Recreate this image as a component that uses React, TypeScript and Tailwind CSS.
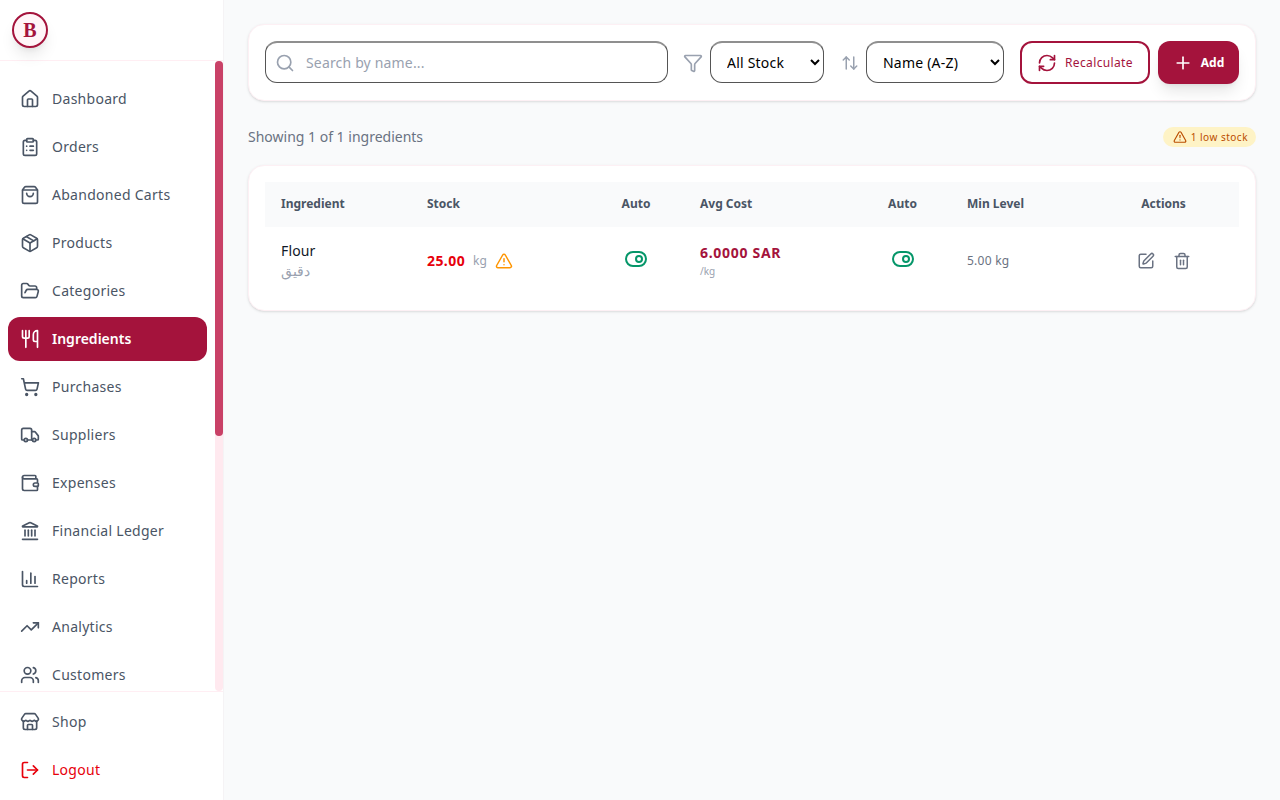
import React from "react";
import {
  House, ClipboardList, ShoppingBag, Package, FolderOpen, Utensils, ShoppingCart, Truck, Wallet, Landmark,
  ChartColumn, TrendingUp, Users, Store, LogOut, Search, Filter, ArrowUpDown, RefreshCw, Plus, TriangleAlert,
  ToggleRight, SquarePen, Trash2,
} from "lucide-react";

const items: [string, React.ComponentType<{ className?: string }>][] = [
  ["Dashboard", House],
  ["Orders", ClipboardList],
  ["Abandoned Carts", ShoppingBag],
  ["Products", Package],
  ["Categories", FolderOpen],
  ["Ingredients", Utensils],
  ["Purchases", ShoppingCart],
  ["Suppliers", Truck],
  ["Expenses", Wallet],
  ["Financial Ledger", Landmark],
  ["Reports", ChartColumn],
  ["Analytics", TrendingUp],
  ["Customers", Users],
];

function NavRow({ label, Icon, active, danger }: { label: string; Icon: React.ComponentType<{ className?: string }>; active?: boolean; danger?: boolean }) {
  const color = active
    ? "bg-[#a4133c] text-white font-semibold"
    : danger
    ? "text-[#e7000b] tracking-[0.02em]"
    : "text-[#4a5565] tracking-[0.02em]";
  return (
    <a className={`flex items-center gap-3 h-11 mb-1 px-3 rounded-xl text-sm shrink-0 ${color}`}>
      <Icon className="w-5 h-5 shrink-0" />
      <span>{label}</span>
    </a>
  );
}

function Toggle() {
  return <ToggleRight className="w-6 h-6 text-[#059669]" />;
}

const field = "h-[42px] rounded-xl border border-[#555555] border-t-2 border-t-[#8f8f8f] bg-white mb-px";

export default function App() {
  return (
    <div className="flex h-screen w-full overflow-hidden bg-[#f9fafb] text-[14px]" style={{ fontFamily: '"Noto Sans", "Noto Sans CJK SC", sans-serif' }}>
      <aside className="w-[224px] shrink-0 h-full bg-white flex flex-col border-r border-[#f5f3f5]">
        <div className="h-[61px] shrink-0 border-b border-[#ffeef3] px-3 flex items-start pt-3">
          <div className="w-9 h-9 rounded-full border-2 border-[#a4133c] bg-[#fff5f8] flex items-center justify-center text-[#a4133c] font-bold text-xl shadow-lg" style={{ fontFamily: '"Liberation Serif", serif' }}>
            B
          </div>
        </div>
        <div className="relative h-[630px] shrink-0">
          <nav className="h-full overflow-hidden pl-2 pr-4 pt-4">
            {items.map(([label, Icon]) => (
              <NavRow key={label} label={label} Icon={Icon} active={label === "Ingredients"} />
            ))}
          </nav>
          <div className="absolute right-0 top-0 w-2 h-full rounded-full bg-[#ffe9ef]">
            <div className="w-2 h-[375px] rounded-full bg-[#c94167]" />
          </div>
        </div>
        <div className="border-t border-[#ffeef3] pl-2 pr-4 pt-2 flex-1">
          <NavRow label="Shop" Icon={Store} />
          <NavRow label="Logout" Icon={LogOut} danger />
        </div>
      </aside>

      <main className="flex-1 min-w-0 pt-6 pl-6 pr-6">
        <section className="h-[77px] bg-white rounded-2xl border border-[#fdf0f4] shadow-sm pl-4 pr-4 flex items-center">
          <div className="relative w-[403px] shrink-0">
            <Search className="absolute left-[10px] top-[12px] w-5 h-5 text-[#99a1af]" />
            <input placeholder="Search by name..." className={`${field} w-full pl-10 pr-3 text-sm tracking-[0.012em] outline-none placeholder:text-[#99a1af]`} />
          </div>
          <Filter className="w-5 h-5 ml-[15px] text-[#99a1af] shrink-0" />
          <select defaultValue="All Stock" className={`${field} ml-[7px] w-[114px] pl-3 pr-1 text-sm tracking-[0.015em] text-black appearance-auto`}>
            <option>All Stock</option>
          </select>
          <ArrowUpDown className="ml-[17px] w-[18px] h-[18px] text-[#99a1af] shrink-0" />
          <select defaultValue="Name (A-Z)" className={`${field} ml-[7px] w-[138px] pl-3 pr-1 text-sm tracking-[0.015em] text-black appearance-auto`}>
            <option>Name (A-Z)</option>
          </select>
          <button className="ml-4 w-[130px] h-[43px] rounded-xl border-2 border-[#a4133c] bg-white text-[#a4133c] text-xs tracking-[0.03em] flex items-center justify-center gap-2">
            <RefreshCw className="w-5 h-5" />
            Recalculate
          </button>
          <button className="ml-2 w-[81px] h-[43px] rounded-xl bg-[#a4133c] text-white text-xs font-bold flex items-center justify-center gap-2 shadow-lg">
            <Plus className="w-5 h-5" />
            Add
          </button>
        </section>

        <div className="flex items-center justify-between mt-6 h-[24px]">
          <span className="text-sm text-[#6a7282]">Showing 1 of 1 ingredients</span>
          <span className="h-5 rounded-full bg-[#fef3c6] text-[#bb4d00] text-[10px] tracking-[0.05em] pl-2.5 pr-2 flex items-center gap-1">
            <TriangleAlert className="w-3.5 h-3.5" />
            1 low stock
          </span>
        </div>

        <section className="mt-[16px] h-[146px] bg-white rounded-2xl border border-[#fdf0f4] shadow-sm p-4">
          <table className="w-full table-fixed border-collapse">
            <colgroup>
              <col className="w-[146px]" />
              <col className="w-[177px]" />
              <col className="w-[96px]" />
              <col className="w-[170px]" />
              <col className="w-[97px]" />
              <col className="w-[137px]" />
              <col className="w-[151px]" />
            </colgroup>
            <thead>
              <tr className="h-[45px] bg-[#f9fafb] text-xs font-bold text-[#4a5565]">
                <th className="text-left pl-4 pb-0.5 font-bold">Ingredient</th>
                <th className="text-left pl-4 pb-0.5 font-bold">Stock</th>
                <th className="text-center pb-0.5 font-bold">Auto</th>
                <th className="text-left pl-4 pb-0.5 font-bold">Avg Cost</th>
                <th className="text-center pb-0.5 font-bold">Auto</th>
                <th className="text-left pl-4 pb-0.5 font-bold">Min Level</th>
                <th className="text-center pb-0.5 font-bold">Actions</th>
              </tr>
            </thead>
            <tbody>
              <tr className="h-[67px]">
                <td className="pl-4">
                  <div className="text-sm text-[#101828] leading-5 tracking-[0.01em]">Flour</div>
                  <div className="text-sm text-[#99a1af] leading-5">دقيق</div>
                </td>
                <td className="pl-4">
                  <div className="flex items-center">
                    <span className="text-sm font-bold tracking-[0.03em] text-[#e7000b]">25.00</span>
                    <span className="text-xs text-[#99a1af] ml-2">kg</span>
                    <TriangleAlert className="w-[18px] h-[18px] text-[#ff9500] ml-2" />
                  </div>
                </td>
                <td>
                  <div className="flex justify-center -mt-1"><Toggle /></div>
                </td>
                <td className="pl-4">
                  <div className="text-sm font-bold tracking-[0.05em] text-[#a4133c] leading-5">6.0000 SAR</div>
                  <div className="text-[10px] text-[#99a1af] leading-4">/kg</div>
                </td>
                <td>
                  <div className="flex justify-center -mt-1"><Toggle /></div>
                </td>
                <td className="pl-4 text-xs tracking-[0.02em] text-[#6a7282]">5.00 kg</td>
                <td>
                  <div className="flex justify-center gap-[18px] text-[#6a7282]">
                    <SquarePen className="w-[18px] h-[18px]" />
                    <Trash2 className="w-[18px] h-[18px]" />
                  </div>
                </td>
              </tr>
            </tbody>
          </table>
        </section>
      </main>
    </div>
  );
}
